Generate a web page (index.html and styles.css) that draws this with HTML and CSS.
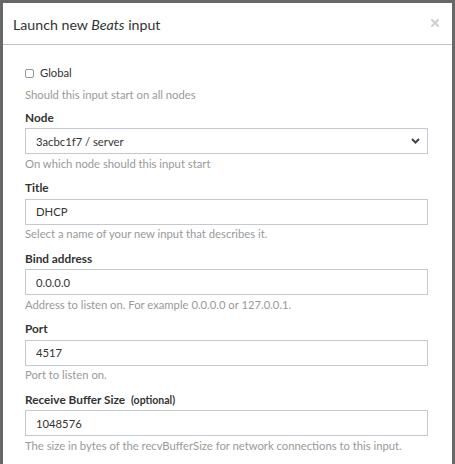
FILE: index.html
```html
<!DOCTYPE html>
<html lang="en">
<head>
<meta charset="utf-8">
<title>Launch new Beats input</title>
<link rel="stylesheet" href="styles.css">
</head>
<body>
<div class="modal">
  <div class="modal-header">
    <h4 class="modal-title">Launch new <em>Beats</em> input</h4>
    <button class="close" type="button" aria-label="Close">
      <svg width="8" height="8" viewBox="0 0 8 8"><path d="M1 1L7 7M7 1L1 7" stroke="#cfcfcf" stroke-width="2" stroke-linecap="square"/></svg>
    </button>
  </div>
  <div class="modal-body">
    <label class="check-row"><input type="checkbox" class="check"><span>Global</span></label>
    <div class="help first-help">Should this input start on all nodes</div>

    <div class="group first-group">
      <div class="label">Node</div>
      <div class="select-wrap">
        <select class="control"><option>3acbc1f7 / server</option></select>
        <svg class="chevron" width="9" height="6" viewBox="0 0 9 6"><path d="M1 1L4.5 4.5L8 1" fill="none" stroke="#444" stroke-width="2"/></svg>
      </div>
      <div class="help">On which node should this input start</div>
    </div>

    <div class="group">
      <div class="label">Title</div>
      <input class="control" type="text" value="DHCP">
      <div class="help">Select a name of your new input that describes it.</div>
    </div>

    <div class="group">
      <div class="label">Bind address</div>
      <input class="control" type="text" value="0.0.0.0">
      <div class="help">Address to listen on. For example 0.0.0.0 or 127.0.0.1.</div>
    </div>

    <div class="group">
      <div class="label">Port</div>
      <input class="control" type="text" value="4517">
      <div class="help">Port to listen on.</div>
    </div>

    <div class="group">
      <div class="label">Receive Buffer Size <span class="optional">(optional)</span></div>
      <input class="control" type="text" value="1048576">
      <div class="help">The size in bytes of the recvBufferSize for network connections to this input.</div>
    </div>
  </div>
</div>
</body>
</html>
```
FILE: styles.css
```css
html, body {
  margin: 0;
  padding: 0;
}
body {
  background: #686868;
  font-family: Lato, "Noto Sans", sans-serif;
  font-size: 11.25px;
  color: #333;
  height: 464px;
  overflow: hidden;
}
.modal {
  margin: 3px 3px 0 3px;
  background: #fff;
  height: 461px;
}
.modal-header {
  box-sizing: border-box;
  height: 42px;
  border-bottom: 1px solid #bcc3cc;
  padding: 12px 13px 0 10px;
  display: flex;
  justify-content: space-between;
  align-items: flex-start;
}
.modal-title {
  margin: 0;
  font-size: 14.2px;
  line-height: 20px;
  font-weight: 400;
  color: #333;
}
.modal-title em {
  font-style: italic;
}
.close {
  border: 0;
  background: none;
  padding: 0;
  margin: 4px 0 0 0;
  width: 8px;
  height: 8px;
  display: flex;
}
.modal-body {
  padding: 20px 24px 0 22px;
}
.check-row {
  display: flex;
  align-items: center;
  height: 16px;
  gap: 6px;
  line-height: 16px;
  color: #333;
}
.check {
  appearance: none;
  -webkit-appearance: none;
  margin: 0;
  width: 9px;
  height: 9px;
  border: 1px solid #959595;
  border-radius: 2px;
  background: #fff;
  box-sizing: border-box;
}
.help {
  color: #999;
  line-height: 16px;
  margin-top: 1.5px;
}
.first-help {
  margin-top: 6px;
}
.group {
  margin-top: 7.5px;
  display: flex;
  flex-direction: column;
}
.first-group {
  margin-top: 5.5px;
}
.label {
  font-weight: 700;
  font-size: 11.8px;
  line-height: 18px;
  margin-bottom: 1.5px;
  color: #333;
}
.optional {
  font-size: 10.5px;
  margin-left: 3px;
}
.control {
  box-sizing: border-box;
  display: block;
  width: 100%;
  height: 26px;
  border: 1px solid #c4c9d1;
  border-radius: 0;
  padding: 0 10px;
  margin: 0;
  font-family: Lato, "Noto Sans", sans-serif;
  font-size: 11.25px;
  color: #333;
  background: #fff;
  outline: none;
}
select.control {
  appearance: none;
  -webkit-appearance: none;
}
.select-wrap {
  position: relative;
}
.chevron {
  position: absolute;
  right: 8px;
  top: 10px;
  pointer-events: none;
}
```
